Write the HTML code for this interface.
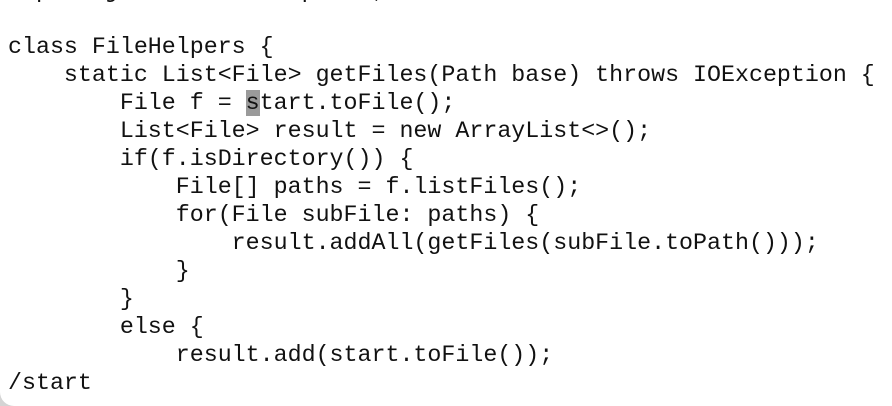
<!DOCTYPE html>
<html><head><meta charset="utf-8"><style>
html,body{margin:0;padding:0;width:892px;height:406px;overflow:hidden;background:#fff;}
pre{position:absolute;left:8px;top:-23px;margin:0;font-family:"Liberation Mono",monospace;font-size:23.3px;line-height:28px;color:#111;}
.hl{background:#9a9a9a;}
.corner2{position:absolute;left:0;bottom:0;width:14px;height:14px;overflow:hidden;}
</style></head><body>
<pre>import java.io.IOException;

class FileHelpers {
    static List&lt;File&gt; getFiles(Path base) throws IOException {
        File f = <span class="hl">s</span>tart.toFile();
        List&lt;File&gt; result = new ArrayList&lt;&gt;();
        if(f.isDirectory()) {
            File[] paths = f.listFiles();
            for(File subFile: paths) {
                result.addAll(getFiles(subFile.toPath()));
            }
        }
        else {
            result.add(start.toFile());
/start</pre>
<div class="corner2"><div style="position:absolute;left:0;top:0;width:14px;height:14px;background:#d4d4d4"></div><div style="position:absolute;left:0;top:-14px;width:28px;height:28px;border-radius:50%;background:#fff"></div></div>
</body></html>
